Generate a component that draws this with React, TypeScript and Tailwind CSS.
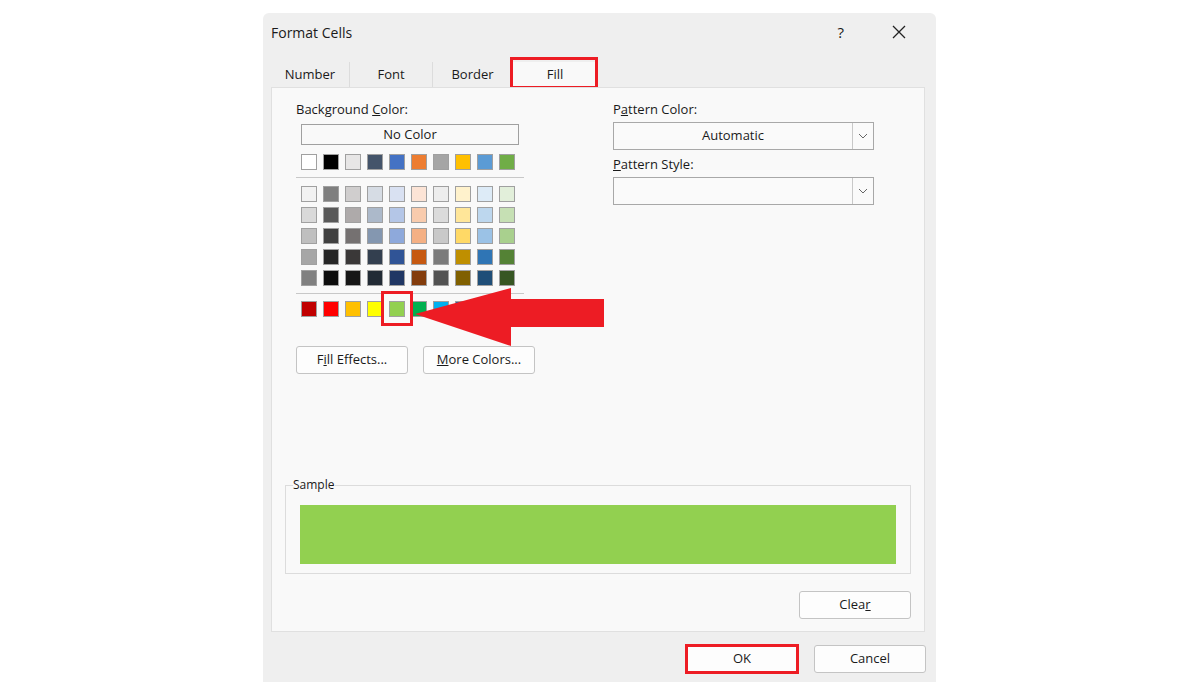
import React from "react";

const theme = ["#ffffff","#000000","#e7e6e6","#44546a","#4472c4","#ed7d31","#a5a5a5","#ffc000","#5b9bd5","#70ad47"];
const tints = [
  ["#f2f2f2","#7f7f7f","#d0cece","#d6dce4","#d9e1f2","#fce4d6","#ededed","#fff2cc","#ddebf7","#e2efda"],
  ["#d9d9d9","#595959","#aeaaaa","#acb9ca","#b4c6e7","#f8cbad","#dbdbdb","#ffe699","#bdd7ee","#c6e0b4"],
  ["#bfbfbf","#404040","#757171","#8497b0","#8ea9db","#f4b084","#c9c9c9","#ffd966","#9bc2e6","#a9d08e"],
  ["#a6a6a6","#262626","#3a3838","#333f4f","#305496","#c65911","#7b7b7b","#bf8f00","#2f75b5","#548235"],
  ["#808080","#0d0d0d","#161616","#222b35","#203764","#833c0c","#525252","#806000","#1f4e78","#375623"],
];
const standard = ["#c00000","#ff0000","#ffc000","#ffff00","#92d050","#00b050","#00b0f0","#0070c0","#002060","#7030a0"];

function Sw({ c }: { c: string }) {
  return <div className="w-4 h-4 border border-[#a0a0a0] shrink-0" style={{ background: c }} />;
}

function Combo({ text }: { text: string }) {
  return (
    <div className="flex w-[261px] h-[28px] border border-[#a8a8a8] bg-[#fafafa]">
      <div className="flex-1 flex items-center justify-center text-[13px] text-[#1a1a1a]">{text}</div>
      <div className="w-[21px] border-l border-[#c8c8c8] flex items-center justify-center">
        <svg width="10" height="6" viewBox="0 0 10 6"><path d="M1 1l4 4 4-4" fill="none" stroke="#666" strokeWidth="1" /></svg>
      </div>
    </div>
  );
}

function Btn({ children, w = "w-[112px]", extra = "" }: { children: React.ReactNode; w?: string; extra?: string }) {
  return (
    <div className={`${w} h-[28px] border border-[#c4c4c4] rounded-[3px] bg-[#fdfdfd] flex items-center justify-center text-[13px] text-[#1a1a1a] ${extra}`}>{children}</div>
  );
}

export default function App() {
  return (
    <div className="w-[1200px] h-[695px] bg-white relative" style={{ fontFamily: '"Open Sans", "Noto Sans", sans-serif' }}>
      <div className="absolute left-[263px] top-[13px] w-[673px] h-[669px] bg-[#efefef] rounded-t-[6px] flex flex-col">
        <div className="h-[38px] flex items-center px-[8px] text-[14px] text-[#1a1a1a]">
          <span className="flex-1">Format Cells</span>
          <span className="mr-[48px] text-[15px]">?</span>
          <svg width="14" height="14" viewBox="0 0 14 14" className="mr-[22px]"><path d="M1 1l12 12M13 1L1 13" stroke="#222" strokeWidth="1.3" /></svg>
        </div>
        <div className="h-[11px]" />
        <div className="flex ml-[8px] h-[25px] text-[13px] text-[#1a1a1a]">
          <div className="w-[79px] flex items-center justify-center border-r border-[#dcdcdc]">Number</div>
          <div className="w-[83px] flex items-center justify-center border-r border-[#dcdcdc]">Font</div>
          <div className="w-[80px] flex items-center justify-center border-r border-[#dcdcdc]">Border</div>
          <div className="relative w-[84px] flex items-center justify-center bg-[#f9f9f9]">
            Fill
            <div className="absolute left-[-3px] right-[-1px] top-[-5px] bottom-[-2px] border-[3px] border-[#ed1c24]" />
          </div>
        </div>
        <div className="ml-[8px] w-[654px] h-[545px] bg-[#f9f9f9] border border-[#e0e0e0] flex flex-col relative">
          <div className="flex">
            <div className="pl-[24px] pt-[13px] w-[341px]">
              <div className="text-[13px] text-[#1a1a1a] leading-[16px]">Background <u>C</u>olor:</div>
              <div className="ml-[5px] mt-[7px] w-[218px] h-[21px] border border-[#a0a0a0] flex items-center justify-center text-[13px] text-[#1a1a1a]">No Color</div>
              <div className="ml-[5px] mt-[9px] flex gap-[6px]">{theme.map((c, i) => <Sw key={i} c={c} />)}</div>
              <div className="mt-[7px] w-[228px] h-px bg-[#c8c8c8]" />
              <div className="ml-[5px] mt-[8px] flex flex-col gap-[5px]">
                {tints.map((r, i) => <div key={i} className="flex gap-[6px]">{r.map((c, j) => <Sw key={j} c={c} />)}</div>)}
              </div>
              <div className="mt-[7px] w-[228px] h-px bg-[#c8c8c8]" />
              <div className="ml-[5px] mt-[7px] flex gap-[6px] relative">
                {standard.map((c, i) => <Sw key={i} c={c} />)}
                <div className="absolute left-[80px] top-[-10px] w-[32px] h-[35px] border-[3px] border-[#ed1c24]" />
              </div>
              <div className="mt-[29px] flex gap-[15px]">
                <Btn>F<u>i</u>ll Effects...</Btn>
                <Btn><u>M</u>ore Colors...</Btn>
              </div>
            </div>
            <div className="pt-[13px]">
              <div className="text-[13px] text-[#1a1a1a] leading-[16px]">P<u>a</u>ttern Color:</div>
              <div className="mt-[5px]"><Combo text="Automatic" /></div>
              <div className="mt-[6px] text-[13px] text-[#1a1a1a] leading-[16px]"><u>P</u>attern Style:</div>
              <div className="mt-[5px]"><Combo text="" /></div>
            </div>
          </div>
          <div className="flex-1" />
          <div className="mx-[13px] h-[89px] border border-[#dcdcdc] relative px-[14px] pt-[19px]">
            <div className="absolute left-[7px] top-[-8px] bg-[#f9f9f9] text-[12px] text-[#1a1a1a] leading-[14px] pr-[1px]">Sample</div>
            <div className="h-[59px] bg-[#92d050]" />
          </div>
          <div className="flex justify-end mr-[13px] mt-[17px] mb-[12px]">
            <Btn>Clea<u>r</u></Btn>
          </div>
          <svg className="absolute left-[143px] top-[200px]" width="190" height="60" viewBox="0 0 190 60">
            <polygon points="0,26 96,0 96,11 189,11 189,39 96,39 96,58" fill="#ed1c24" />
          </svg>
        </div>
        <div className="flex justify-end gap-[16px] mr-[10px] mt-[13px]">
          <div className="relative"><Btn>OK</Btn><div className="absolute inset-[-1px] border-[3px] border-[#ed1c24]" /></div>
          <Btn>Cancel</Btn>
        </div>
      </div>
    </div>
  );
}
